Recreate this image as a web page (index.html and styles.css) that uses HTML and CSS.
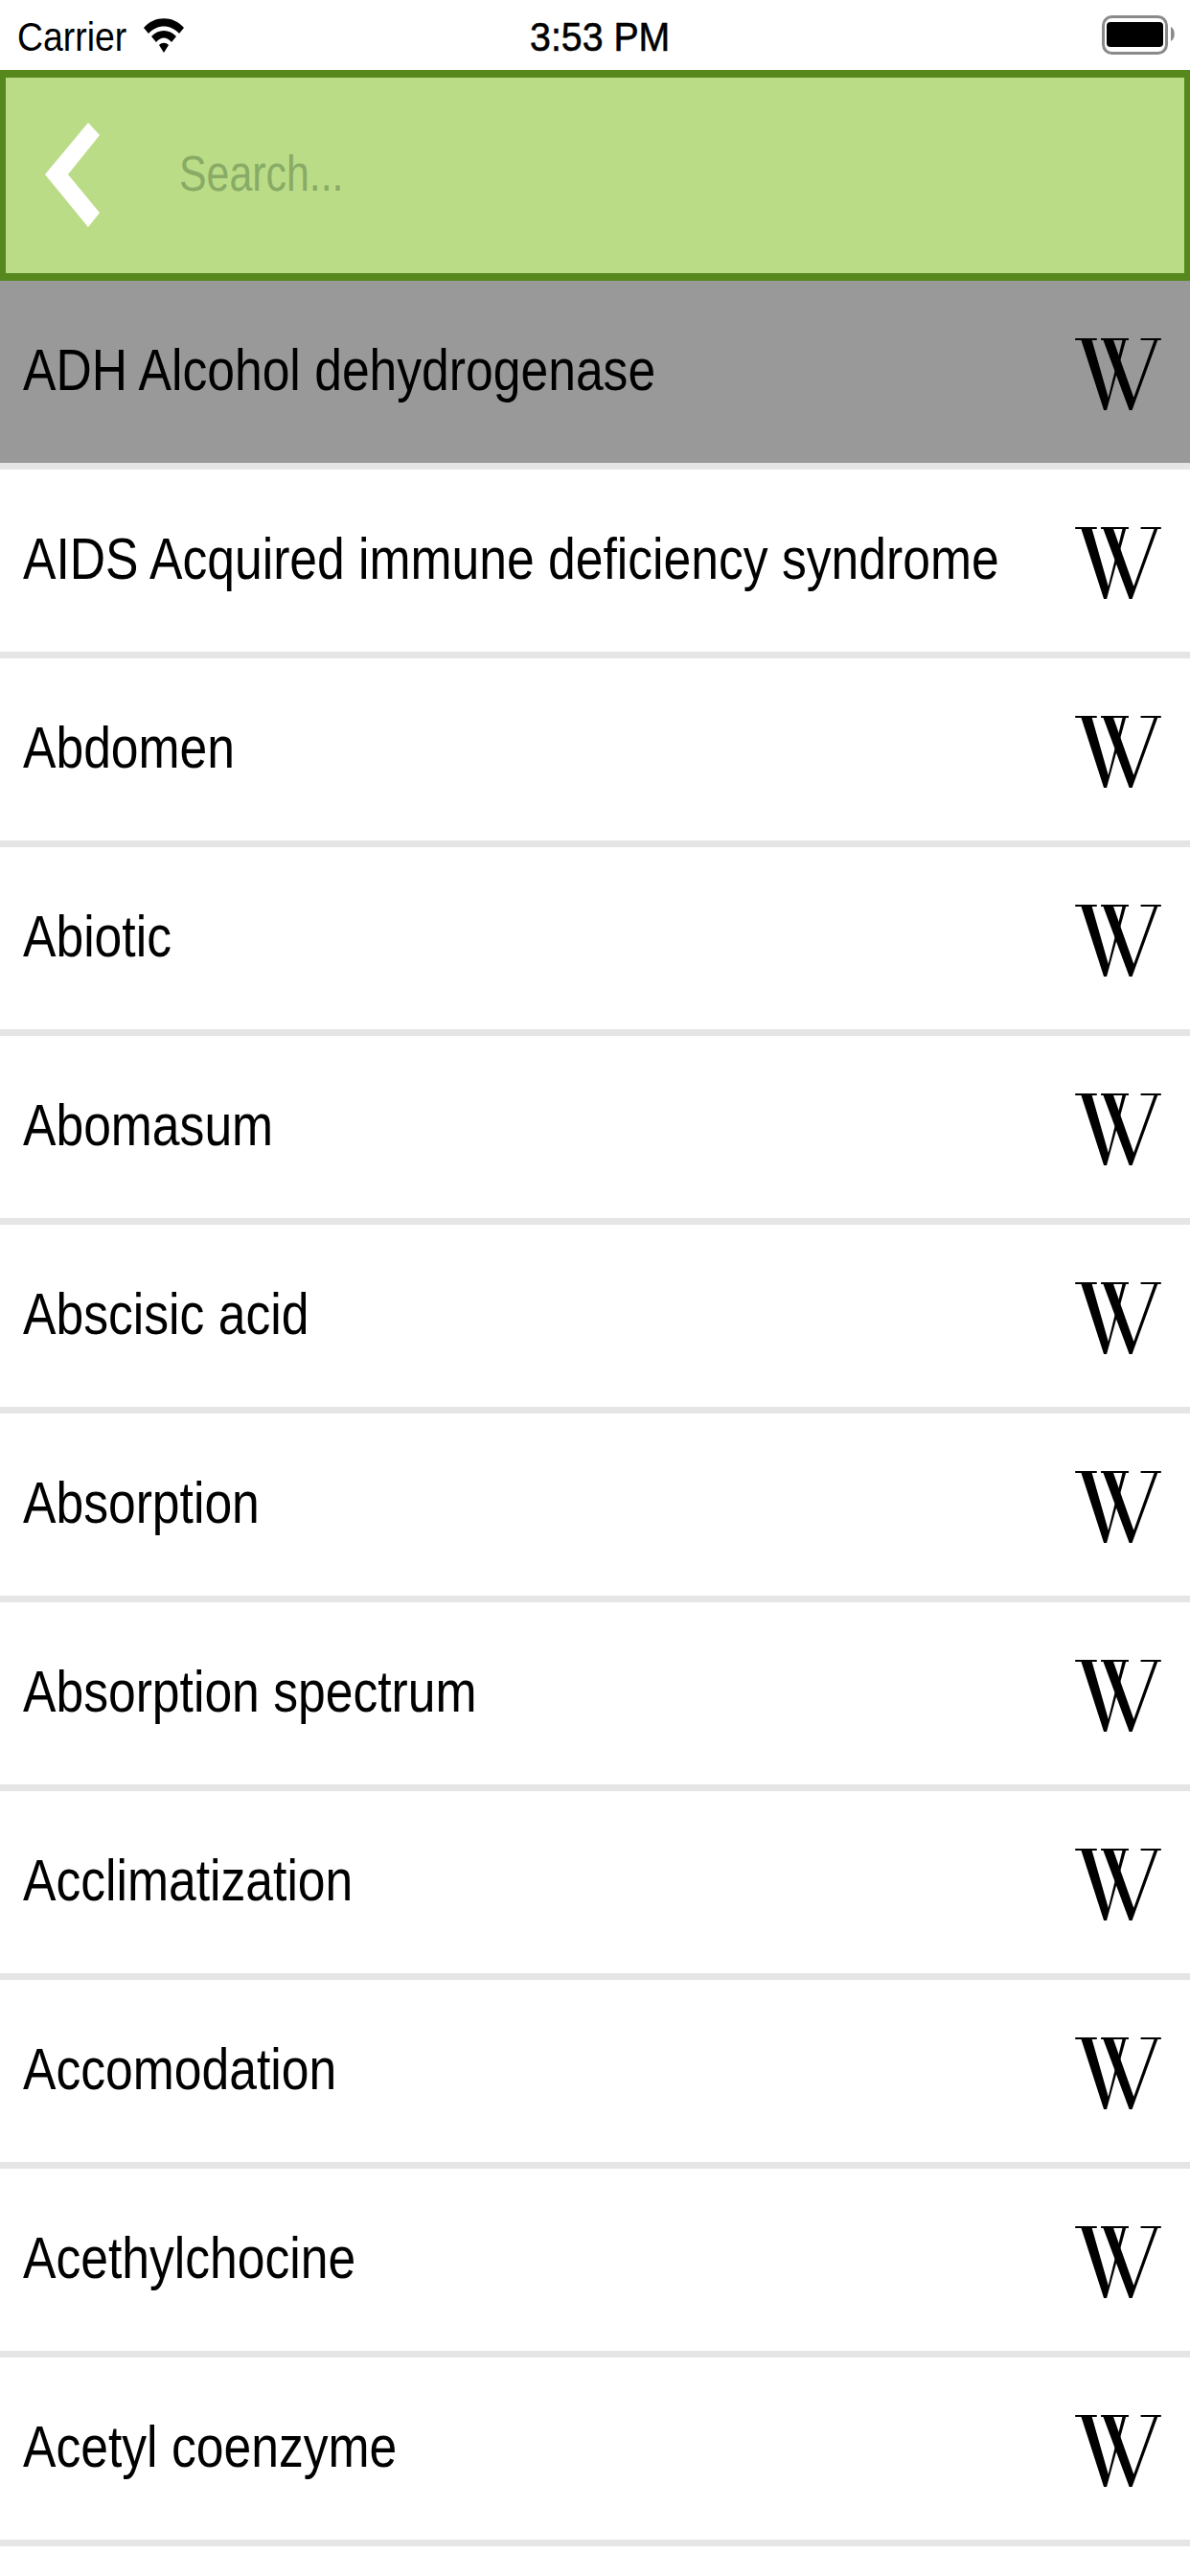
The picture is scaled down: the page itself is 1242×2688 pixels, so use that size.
FILE: index.html
```html
<!DOCTYPE html>
<html lang="en">
<head>
    <meta charset="UTF-8">
    <meta name="viewport" content="width=device-width, initial-scale=1.0">
    <title>Glossary</title>
    <link rel="stylesheet" href="styles.css">
</head>
<body>
    <svg class="defs" width="0" height="0">
        <symbol id="wiki" viewBox="0 0 270 226">
            <rect x="0" y="0" width="68" height="6"/>
            <rect x="81" y="0" width="87" height="6"/>
            <rect x="206" y="0" width="64" height="6"/>
            <polygon points="17,0 51,0 104,186 149,4 160,4 99,226 90,226"/>
            <polygon points="86,0 118,0 184,186 249,4 260,4 179,226 170,226"/>
        </symbol>
    </svg>

    <div class="status-bar">
        <div class="status-left">
            <span class="carrier">Carrier</span>
            <svg class="wifi" width="42" height="36" viewBox="0 0 42 36">
                <path d="M0 10 C11 -3 31 -3 42 10 L37 16 C28 6 14 6 5 16 Z" fill="#000"/>
                <path d="M8 19 C15 11 27 11 34 19 L29 25 C24 19 18 19 13 25 Z" fill="#000"/>
                <path d="M16 28 C19 25 23 25 26 28 L21 36 Z" fill="#000"/>
            </svg>
        </div>
        <span class="time">3:53 PM</span>
        <div class="status-right">
            <svg class="battery" width="77" height="41" viewBox="0 0 77 41">
                <rect x="1.5" y="1.5" width="66" height="38" rx="9" fill="none" stroke="#8a8a8a" stroke-width="3"/>
                <rect x="5" y="7" width="59" height="26" rx="4" fill="#000"/>
                <path d="M72 12 C77 14 77 25 72 27 Z" fill="#8a8a8a"/>
            </svg>
        </div>
    </div>

    <div class="search-bar">
        <svg class="back" width="57" height="110" viewBox="0 0 57 110">
            <polygon points="0,54 45,0 57,13 24,54 57,94 45,109" fill="#fff"/>
        </svg>
        <span class="placeholder">Search...</span>
    </div>

    <ul class="list">
        <li class="row selected"><span class="name">ADH Alcohol dehydrogenase</span><svg class="wiki"><use href="#wiki"/></svg></li>
        <li class="row"><span class="name">AIDS Acquired immune deficiency syndrome</span><svg class="wiki"><use href="#wiki"/></svg></li>
        <li class="row"><span class="name">Abdomen</span><svg class="wiki"><use href="#wiki"/></svg></li>
        <li class="row"><span class="name">Abiotic</span><svg class="wiki"><use href="#wiki"/></svg></li>
        <li class="row"><span class="name">Abomasum</span><svg class="wiki"><use href="#wiki"/></svg></li>
        <li class="row"><span class="name">Abscisic acid</span><svg class="wiki"><use href="#wiki"/></svg></li>
        <li class="row"><span class="name">Absorption</span><svg class="wiki"><use href="#wiki"/></svg></li>
        <li class="row"><span class="name">Absorption spectrum</span><svg class="wiki"><use href="#wiki"/></svg></li>
        <li class="row"><span class="name">Acclimatization</span><svg class="wiki"><use href="#wiki"/></svg></li>
        <li class="row"><span class="name">Accomodation</span><svg class="wiki"><use href="#wiki"/></svg></li>
        <li class="row"><span class="name">Acethylchocine</span><svg class="wiki"><use href="#wiki"/></svg></li>
        <li class="row"><span class="name">Acetyl coenzyme</span><svg class="wiki"><use href="#wiki"/></svg></li>
    </ul>
</body>
</html>
```

FILE: styles.css
```css
* {
    margin: 0;
    padding: 0;
    box-sizing: border-box;
}

html, body {
    height: 2688px;
    overflow: hidden;
}

body {
    font-family: 'Liberation Sans', Arial, sans-serif;
    background: #fff;
    color: #000;
}

.defs {
    display: block;
    height: 0;
}

.status-bar {
    height: 73px;
    display: flex;
    align-items: center;
    padding: 0 15px 0 18px;
}

.status-left, .status-right {
    flex: 1;
    display: flex;
    align-items: center;
}

.status-left {
    gap: 18px;
}

.status-right {
    justify-content: flex-end;
}

.carrier {
    display: inline-block;
    width: 114px;
    margin-top: 4px;
    font-size: 42px;
    line-height: 46px;
    white-space: nowrap;
    transform: scaleX(0.89);
    transform-origin: left center;
}

.time {
    display: inline-block;
    margin: 4px 0 0 8px;
    font-size: 42px;
    line-height: 46px;
    white-space: nowrap;
    -webkit-text-stroke: 0.6px #000;
    transform: scaleX(0.935);
}

.search-bar {
    height: 220px;
    background: #bbdc87;
    border: solid #56881e;
    border-width: 8px 6px;
    display: flex;
    align-items: center;
    padding-left: 41px;
    gap: 83px;
}

.back {
    flex: none;
}

.placeholder {
    display: inline-block;
    margin-bottom: 4px;
    font-size: 51px;
    color: #88ab66;
    white-space: nowrap;
    transform: scaleX(0.84);
    transform-origin: left center;
}

.list {
    list-style: none;
}

.row {
    height: 197px;
    border-bottom: 7px solid #e5e5e5;
    display: flex;
    align-items: center;
    justify-content: space-between;
    padding: 0 30px 0 24px;
    background: #fff;
    overflow: hidden;
}

.row.selected {
    background: #999;
}

.name {
    display: inline-block;
    width: 900px;
    margin-bottom: 5px;
    font-size: 62px;
    line-height: 70px;
    white-space: nowrap;
    transform: scaleX(0.8327);
    transform-origin: left center;
}

.wiki {
    width: 90px;
    height: 75px;
    margin-top: 5px;
    fill: #000;
    flex: none;
}
```
